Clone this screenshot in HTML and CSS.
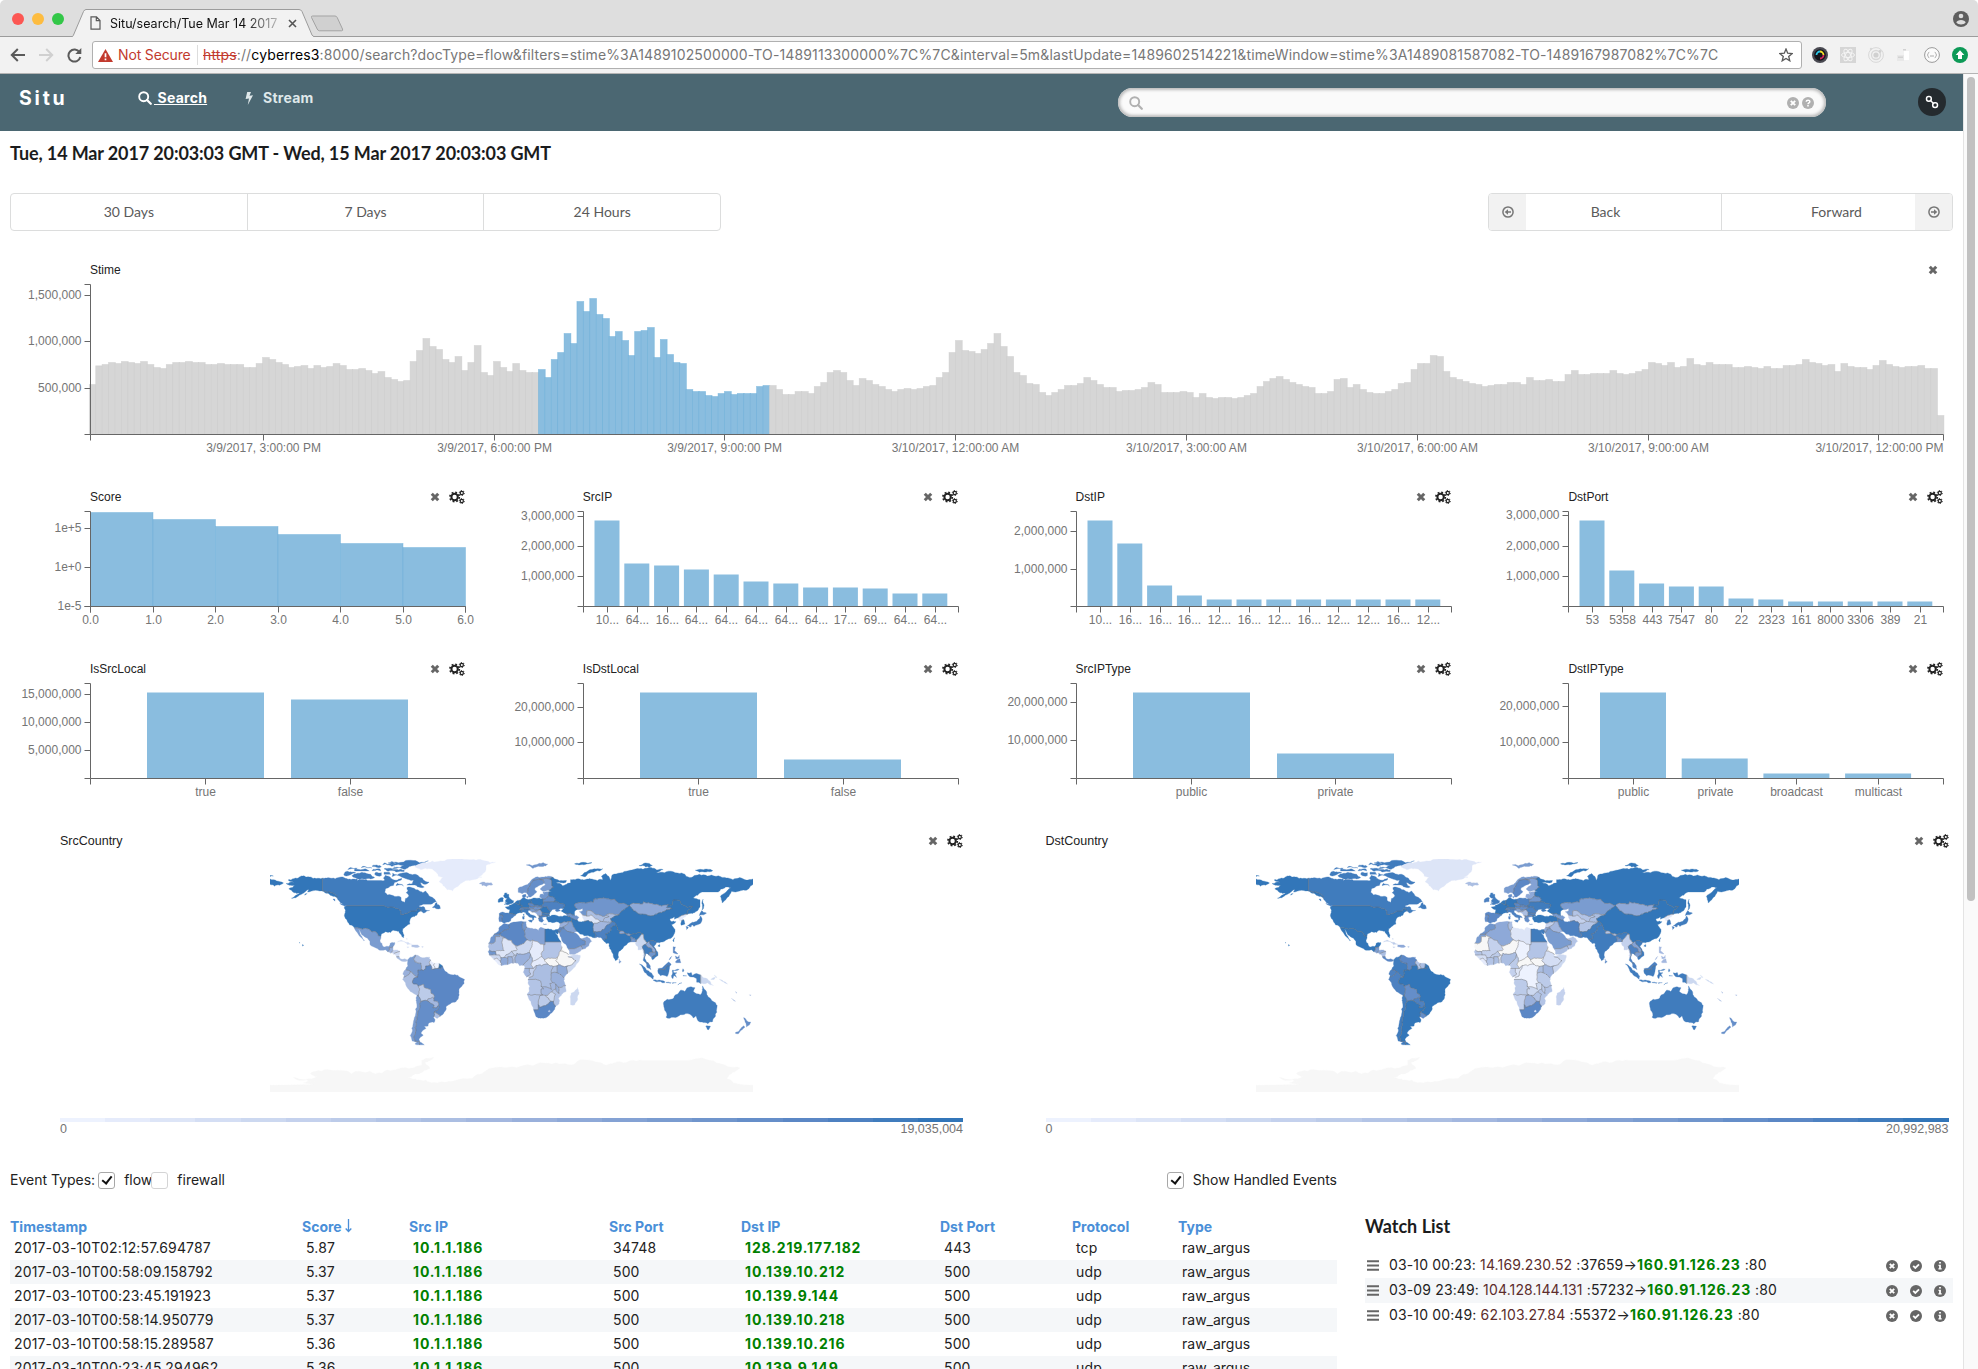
FILE: index.html
```html
<!DOCTYPE html>
<html lang="en">
<head>
<meta charset="utf-8">
<title>Situ/search</title>
<link rel="stylesheet" href="styles.css">
</head>
<body>
<svg class="sprite" aria-hidden="true">
  <symbol id="i-x" viewBox="0 0 9 9"><path d="M1.6 1.6 7.4 7.4M7.4 1.6 1.6 7.4" stroke="currentColor" stroke-width="2.7"/></symbol>
  <symbol id="i-gears" viewBox="0 0 16 14">
    <g fill="none" stroke="currentColor">
      <circle cx="5.6" cy="7" r="3.2" stroke-width="2"/><circle cx="5.6" cy="7" r="4.7" stroke-width="1.7" stroke-dasharray="1.85 1.85"/>
      <circle cx="12.8" cy="3" r="1.6" stroke-width="1.2"/><circle cx="12.8" cy="3" r="2.5" stroke-width="1" stroke-dasharray="1.3 1.3"/>
      <circle cx="12.8" cy="11" r="1.6" stroke-width="1.2"/><circle cx="12.8" cy="11" r="2.5" stroke-width="1" stroke-dasharray="1.3 1.3"/>
    </g>
  </symbol>
  <symbol id="i-search" viewBox="0 0 14 14"><circle cx="5.7" cy="5.7" r="4.5" fill="none" stroke="currentColor" stroke-width="1.9"/><path d="M9 9l3.8 3.8" stroke="currentColor" stroke-width="2.2" stroke-linecap="round"/></symbol>
  <symbol id="i-cx" viewBox="0 0 12 12"><circle cx="6" cy="6" r="6" fill="currentColor"/><path d="M3.8 3.8 8.2 8.2M8.2 3.8 3.8 8.2" stroke="#fff" stroke-width="1.9"/></symbol>
  <symbol id="i-cq" viewBox="0 0 12 12"><circle cx="6" cy="6" r="6" fill="currentColor"/><path d="M4.2 4.7C4.3 2.6 7.9 2.6 7.8 4.7 7.7 5.9 6 5.8 6 7.2M6 8v1.6" fill="none" stroke="#fff" stroke-width="1.5"/></symbol>
  <symbol id="i-cc" viewBox="0 0 12 12"><circle cx="6" cy="6" r="6" fill="currentColor"/><path d="M3.2 5.9 5.3 8 9 4.3" fill="none" stroke="#fff" stroke-width="1.8"/></symbol>
  <symbol id="i-ci" viewBox="0 0 12 12"><circle cx="6" cy="6" r="6" fill="currentColor"/><path d="M5.1 2h1.8v1.5H5.1zM4.5 4.8h2.4v3.5h.8v1.2H4.4V8.300h.7V6h-.6z" fill="#fff"/></symbol>
  <symbol id="i-left" viewBox="0 0 12 12"><circle cx="6" cy="6" r="5.100" fill="none" stroke="currentColor" stroke-width="1.500"/><path d="M2.700 6 6 3.200v2h3v1.600H6v2z" fill="currentColor"/></symbol>
  <symbol id="i-link" viewBox="0 0 14 14"><g fill="none" stroke="currentColor" stroke-width="1.500"><rect x="1.500" y="1.500" width="4.800" height="4.800" rx="2.200"/><rect x="7.700" y="7.700" width="4.800" height="4.800" rx="2.200"/><path d="M5 5l4 4"/></g></symbol>
  <symbol id="i-menu" viewBox="0 0 12 11"><path d="M0 1.200h12M0 5.500h12M0 9.800h12" stroke="currentColor" stroke-width="1.900"/></symbol>
</svg>

<div class="tabstrip">
  <div class="lights"><i class="red"></i><i class="yellow"></i><i class="green"></i></div>
  <div class="tab">
    <svg class="tab-shape" width="242" height="28" viewBox="0 0 242 28"><path d="M0 27.500C1 27.500 1 27 1.500 26L11.500 2.500Q12.500.5 14 .5H227Q229 .5 230 2.500L240 26Q241 27.500 242 27.500V28H0z" fill="#f2f2f2"/><path d="M0 27.500C1 27.500 1 27 1.500 26L11.500 2.500Q12.500.5 14 .5H227Q229 .5 230 2.500L240 26Q241 27.500 242 27.500" fill="none" stroke="#9c9c9c"/></svg>
    <svg class="tab-doc" width="11" height="14" viewBox="0 0 11 14"><path d="M1 .8h5.500L10 4.500v8.700H1zM6.300 1v3.700H10" fill="none" stroke="#5a5a5a" stroke-width="1.200"/></svg>
    <span class="tab-title">Situ/search/Tue Mar 14 2017 -</span>
    <svg class="tab-close" width="9" height="9" viewBox="0 0 9 9"><path d="M1 1l7 7M8 1 1 8" stroke="#555" stroke-width="1.600"/></svg>
  </div>
  <svg class="newtab" width="34" height="18" viewBox="0 0 34 18"><path d="M2.500 1H25q1.500 0 2.200 1.500L32.500 14q.8 1.800-1 1.800H9.500Q8 15.800 7.200 14L1.500 2.500Q1 1 2.500 1z" fill="#d0d0d0" stroke="#a3a3a3"/></svg>
  <svg class="profile" width="16" height="16" viewBox="0 0 16 16"><circle cx="8" cy="8" r="8" fill="#5e5e5e"/><circle cx="8" cy="5" r="2.300" fill="#dedede"/><path d="M3.300 11.500C4 8 12 8 12.700 11.500 11 14 5 14 3.300 11.500z" fill="#dedede"/></svg>
</div>

<div class="toolbar">
  <svg width="16" height="14" viewBox="0 0 16 14"><path d="M15 7H2M7.800 1 1.800 7l6 6" fill="none" stroke="#5a5a5a" stroke-width="2"/></svg>
  <svg class="fwd" width="16" height="14" viewBox="0 0 16 14"><path d="M1 7h13M8.200 1l6 6-6 6" fill="none" stroke="#d0d0d0" stroke-width="2"/></svg>
  <svg class="reload" width="15" height="15" viewBox="0 0 15 15"><path d="M12.500 4.300A6 6 0 1 0 13.300 9" fill="none" stroke="#5a5a5a" stroke-width="2"/><path d="M14.300 0v6H8.300z" fill="#5a5a5a"/></svg>
  <div class="address">
    <svg width="15" height="13" viewBox="0 0 15 13"><path d="M7.500 0 15 13H0z" fill="#c23a2e"/><path d="M7.500 4.300v4M7.500 9.500v1.700" stroke="#fff" stroke-width="1.700"/></svg>
    <span class="insecure">Not Secure</span>
    <span class="url"><s>https</s>://<b>cyberres3</b>:8000/search?docType=flow&amp;filters=stime%3A1489102500000-TO-1489113300000%7C%7C&amp;interval=5m&amp;lastUpdate=1489602514221&amp;timeWindow=stime%3A1489081587082-TO-1489167987082%7C%7C</span>
    <svg class="star" width="14" height="14" viewBox="0 0 14 14"><path d="M7 1l1.700 4.200 4.500.3-3.500 2.900 1.100 4.400L7 10.400l-3.800 2.400 1.100-4.400L.8 5.500l4.500-.3z" fill="none" stroke="#5a5a5a" stroke-width="1.300"/></svg>
  </div>
  <div class="exts">
    <svg viewBox="0 0 16 16"><circle cx="8" cy="8" r="8" fill="#4a4a52"/><circle cx="8" cy="8" r="5.800" fill="#16161c"/><path d="M4.500 8A3.500 3.500 0 0 1 8 4.500" fill="none" stroke="#2ec8e8" stroke-width="1.800"/><path d="M8 4.500A3.500 3.500 0 0 1 11.500 8" fill="none" stroke="#f4e02a" stroke-width="1.800"/><path d="M11.500 8A3.500 3.500 0 0 1 8 11.500" fill="none" stroke="#d8265c" stroke-width="1.800"/></svg>
    <svg viewBox="0 0 16 16"><path d="M0 0h16v16H0z" fill="#d6d6d6"/><g fill="none" stroke="#f4f4f4"><ellipse cx="8" cy="8" rx="6.500" ry="2.500"/><ellipse cx="8" cy="8" rx="6.500" ry="2.500" transform="rotate(60 8 8)"/><ellipse cx="8" cy="8" rx="6.500" ry="2.500" transform="rotate(120 8 8)"/></g></svg>
    <svg viewBox="0 0 16 16"><g fill="none" stroke="#d8d8d8"><circle cx="8" cy="8" r="7.400"/><circle cx="8" cy="8" r="4.500" stroke-width="1.300"/></g><circle cx="8" cy="8" r="2.600" fill="#d0d0d0"/><circle cx="12" cy="4.500" r="1.400" fill="#d0d0d0"/><circle cx="3" cy="2" r="1.200" fill="#d8d8d8"/></svg>
    <svg viewBox="0 0 16 16"><path d="M1 8h7v6H1z" fill="#e8e8e8"/><path d="M8 4h5v9H8z" fill="#fff"/><path d="M2 9.500h5v1.500H2zM7 2h3v1.500H7z" fill="#d2d2d2"/></svg>
    <svg viewBox="0 0 16 16"><circle cx="8" cy="8" r="7.400" fill="#fbfbfb" stroke="#9a9a9a"/><path d="M5.300 5.300Q4.200 5.300 4.200 6.500T3.200 8q1 .3 1 1.500t1.100 1.200M10.700 5.300q1.100 0 1.100 1.200T12.800 8q-1 .3-1 1.500t-1.100 1.200M6 9h4" fill="none" stroke="#aaa"/></svg>
    <svg viewBox="0 0 16 16"><circle cx="8" cy="8" r="8" fill="#0d9a57"/><path d="M8 3.200 12.300 8H10v4H6V8H3.700z" fill="#fff"/></svg>
  </div>
</div>

<div class="viewport">
<main class="page">
  <header class="nav">
    <span class="brand">Situ</span>
    <a class="nav-search"><svg width="14" height="14"><use href="#i-search"/></svg><u>&nbsp;Search</u></a>
    <a class="nav-stream"><svg width="8" height="13" viewBox="0 0 8 13"><path d="M2.200 0H6L4.500 3.800 8 3.300 2.800 13 4 6.500.6 7z" fill="#dfe8ea"/></svg><span>Stream</span></a>
    <div class="searchbox"><svg width="14" height="14"><use href="#i-search"/></svg><span class="grow"></span><svg width="12" height="12"><use href="#i-cx"/></svg><svg class="help" width="12" height="12"><use href="#i-cq"/></svg></div>
    <span class="linkbtn"><svg width="14" height="14"><use href="#i-link"/></svg></span>
  </header>

  <h1 class="range">Tue, 14 Mar 2017 20:03:03 GMT - Wed, 15 Mar 2017 20:03:03 GMT</h1>

  <div class="buttons">
    <div class="group presets"><span>30 Days</span><span>7 Days</span><span>24 Hours</span></div>
    <div class="group pager">
      <i><svg width="12" height="12"><use href="#i-left"/></svg></i><span class="prev">Back</span><span class="next">Forward</span><i><svg class="flip" width="12" height="12"><use href="#i-left"/></svg></i>
    </div>
  </div>

  <section class="panel timeline">
    <div class="head"><span>Stime</span><svg class="close" width="10" height="10"><use href="#i-x"/></svg></div>
    <svg id="stime" class="chart" width="1943" height="182"></svg>
  </section>

  <div class="grid" id="grid"></div>
  <div class="maps" id="maps"></div>

  <div class="filters">
    <div class="types">Event Types: <i class="box on"></i><span>flow</span><i class="box off"></i><span>firewall</span></div>
    <div class="handled"><i class="box on"></i><span>Show Handled Events</span></div>
  </div>

  <div class="lower">
    <table class="events">
      <thead><tr><th>Timestamp</th><th>Score <svg width="7" height="14" viewBox="0 0 7 14"><path d="M3.500 0v12.500M.7 9.500l2.800 3 2.800-3" fill="none" stroke="#4a8fd8" stroke-width="1.300"/></svg></th><th>Src IP</th><th>Src Port</th><th>Dst IP</th><th>Dst Port</th><th>Protocol</th><th>Type</th></tr></thead>
      <tbody>
        <tr><td>2017-03-10T02:12:57.694787</td><td>5.87</td><td class="ip">10.1.1.186</td><td>34748</td><td class="ip">128.219.177.182</td><td>443</td><td>tcp</td><td>raw_argus</td></tr>
        <tr><td>2017-03-10T00:58:09.158792</td><td>5.37</td><td class="ip">10.1.1.186</td><td>500</td><td class="ip">10.139.10.212</td><td>500</td><td>udp</td><td>raw_argus</td></tr>
        <tr><td>2017-03-10T00:23:45.191923</td><td>5.37</td><td class="ip">10.1.1.186</td><td>500</td><td class="ip">10.139.9.144</td><td>500</td><td>udp</td><td>raw_argus</td></tr>
        <tr><td>2017-03-10T00:58:14.950779</td><td>5.37</td><td class="ip">10.1.1.186</td><td>500</td><td class="ip">10.139.10.218</td><td>500</td><td>udp</td><td>raw_argus</td></tr>
        <tr><td>2017-03-10T00:58:15.289587</td><td>5.36</td><td class="ip">10.1.1.186</td><td>500</td><td class="ip">10.139.10.216</td><td>500</td><td>udp</td><td>raw_argus</td></tr>
        <tr><td>2017-03-10T00:23:45.294962</td><td>5.36</td><td class="ip">10.1.1.186</td><td>500</td><td class="ip">10.139.9.149</td><td>500</td><td>udp</td><td>raw_argus</td></tr>
      </tbody>
    </table>
    <section class="watch">
      <h2>Watch List</h2>
      <div class="item"><svg width="12" height="11"><use href="#i-menu"/></svg><p>03-10 00:23: <em>14.169.230.52</em> :37659→<b>160.91.126.23</b> :80</p><svg class="act" width="12" height="12"><use href="#i-cx"/></svg><svg class="act" width="12" height="12"><use href="#i-cc"/></svg><svg class="act" width="12" height="12"><use href="#i-ci"/></svg></div>
      <div class="item"><svg width="12" height="11"><use href="#i-menu"/></svg><p>03-09 23:49: <em>104.128.144.131</em> :57232→<b>160.91.126.23</b> :80</p><svg class="act" width="12" height="12"><use href="#i-cx"/></svg><svg class="act" width="12" height="12"><use href="#i-cc"/></svg><svg class="act" width="12" height="12"><use href="#i-ci"/></svg></div>
      <div class="item"><svg width="12" height="11"><use href="#i-menu"/></svg><p>03-10 00:49: <em>62.103.27.84</em> :55372→<b>160.91.126.23</b> :80</p><svg class="act" width="12" height="12"><use href="#i-cx"/></svg><svg class="act" width="12" height="12"><use href="#i-cc"/></svg><svg class="act" width="12" height="12"><use href="#i-ci"/></svg></div>
    </section>
  </div>
</main>
<div class="scroll"><div class="thumb"></div></div>
</div>
<script src="script.js"></script>
</body>
</html>
```
FILE: styles.css
```css
* { box-sizing: border-box; }
body { margin: 0; height: 1369px; overflow: hidden; background: #fff; color: #222; font: 14px/1.2 Inter, "Open Sans", sans-serif; }
svg { display: block; flex: none; }
i { font-style: normal; }
.sprite { display: none; }

/* browser frame */
.tabstrip { display: flex; height: 37px; background: #dedede; border-bottom: 1px solid #9c9c9c; border-radius: 5px 5px 0 0; padding: 0 9px 0 12px; }
.lights { display: flex; gap: 8px; padding-top: 13px; width: 60px; }
.lights i { width: 12px; height: 12px; border-radius: 50%; }
.red { background: #fc5753; }
.yellow { background: #fdbc40; }
.green { background: #33c748; }
.tab { display: grid; grid-template-columns: 18px 11px 9px 172px 6px 9px 1fr; align-items: center; width: 242px; height: 28px; margin-top: 9px; }
.tab > * { grid-row: 1; }
.tab-shape { grid-column: 1 / -1; }
.tab-doc { grid-column: 2; }
.tab-title { grid-column: 4; font-size: 12.500px; white-space: nowrap; overflow: hidden; color: #111; -webkit-mask-image: linear-gradient(90deg, #000 78%, transparent 104%); }
.tab-close { grid-column: 6; }
.newtab { margin: 15px 0 0 -4px; }
.profile { margin: 11px 0 0 auto; }
.toolbar { display: flex; align-items: center; height: 37px; background: #f2f2f2; border-bottom: 1px solid #b4b4b4; padding: 0 10px; }
.toolbar .fwd { margin-left: 12px; }
.toolbar .reload { margin: 0 10px 0 13px; }
.address { display: flex; flex: none; align-items: center; width: 1710px; height: 28px; background: #fff; border: 1px solid #b0b0b0; border-radius: 3px; padding: 0 8px 0 5px; white-space: nowrap; }
.insecure { width: 80px; height: 20px; line-height: 20px; margin-left: 5px; color: #c23a2e; font-size: 14px; letter-spacing: -.15px; border-right: 1px solid #ddd; }
.url { margin-left: 5px; color: #777; font-size: 14px; letter-spacing: .135px; flex: 1; }
.url s { color: #c23a2e; }
.url b { font-weight: 400; color: #000; }
.exts { display: flex; gap: 12px; margin-left: 10px; }
.exts svg { width: 16px; height: 16px; }
.viewport { display: flex; height: 1295px; }
.page { width: 1963px; overflow: hidden; }
.scroll { width: 15px; background: #fafafa; border-left: 1px solid #e4e4e4; padding: 3px 2px 0 3px; }
.thumb { width: 8px; height: 824px; border-radius: 4px; background: #c1c1c1; }

/* application header */
.nav { display: flex; height: 57px; background: #4b6772; color: #fff; padding-left: 19px; }
.brand { width: 119px; padding-top: 13px; font: 700 19.500px/22px Inter, sans-serif; letter-spacing: 2.800px; }
.nav a { display: flex; align-items: center; height: 20px; margin-top: 14px; font-weight: 700; letter-spacing: .25px; }
.nav-search { width: 107px; }
.nav-search svg { margin-right: 2px; }
.nav-stream { color: #dfe8ea; gap: 10px; }
.searchbox { display: flex; align-items: center; width: 708px; height: 29px; margin: 14px 0 0 auto; background: #fafafa; border-radius: 15px; box-shadow: inset 0 0 3px 2px #bbb; padding: 0 12px 0 11px; color: #b0b0b0; }
.grow { flex: 1; }
.help { margin-left: 3px; }
.linkbtn { display: grid; place-items: center; width: 28px; height: 28px; margin: 14px 17px 0 92px; border-radius: 50%; background: #242a2e; }

.range { height: 62px; margin: 0; padding: 11px 0 0 10px; font: 700 18px/22px Lato, sans-serif; letter-spacing: -.13px; color: #1b1c1d; }
.buttons { display: flex; justify-content: space-between; height: 38px; padding: 0 10px; font: 14px Lato, sans-serif; color: #5a5a5a; }
.group { display: flex; border: 1px solid #dcdddd; border-radius: 4px; overflow: hidden; }
.group span { flex: 1; display: grid; place-items: center; padding-bottom: 2px; border-left: 1px solid #dcdddd; }
.group span:first-child, .group i + span { border-left: 0; }
.presets { width: 711px; }
.pager { width: 465px; }
.pager i { display: grid; place-items: center; width: 37px; background: #f2f2f2; color: #777; }
.pager .prev { flex: none; width: 195px; padding-right: 36px; }
.pager .next { padding-left: 36px; }
.flip { transform: scaleX(-1); }

/* chart panels */
.head { display: flex; align-items: center; height: 16px; padding: 0 10px 0 80px; font: 12px "Liberation Sans", Arial, sans-serif; color: #222; }
.head .close { margin-left: auto; color: #666; }
.head .gear { margin-left: 9px; color: #222; }
.timeline { padding: 31px 0 0 10px; }
.timeline .head { padding-right: 25px; }
.chart { overflow: visible; }
.chart text { font: 12px "Liberation Sans", Arial, sans-serif; fill: #757575; }
.chart .axis { fill: none; stroke: #666; }
.bar { fill: #8abddf; }
.bar.edge { stroke: #6bafd9; stroke-width: .7px; stroke-opacity: .6; }
.bar.muted { fill: #d6d6d6; stroke: #ccc; stroke-width: .7px; stroke-opacity: .6; }
.grid { display: grid; grid-template-columns: repeat(4, 460px); column-gap: 32.800px; row-gap: 28px; padding: 28px 0 0 10px; }
.grid .head { padding: 1px 5px 0 80px; }
.maps { display: grid; grid-template-columns: 903px 903px; column-gap: 82.500px; padding: 28px 0 0 60px; }
.maps .head { padding: 1px 0 0; font-size: 12.500px; }
.map { margin: 11px 0 26px 210px; }
.borders { fill: none; stroke: #666; stroke-opacity: .55; stroke-width: .8px; }
.legend { display: flex; height: 4px; }
.legend i { flex: 1; }
.ends { display: flex; justify-content: space-between; font: 12.500px/15px "Liberation Sans", Arial, sans-serif; color: #757575; }

/* filters and lists */
.filters { display: flex; width: 1337px; height: 17px; margin-top: 35px; padding-left: 10px; justify-content: space-between; }
.types, .handled { display: flex; align-items: center; white-space: nowrap; }
.box { width: 17px; height: 17px; border: 1px solid #a8a8a8; border-radius: 3px; }
.box.off { border-color: #d4d4d5; }
.box.on::after { content: ""; display: block; width: 4px; height: 8px; margin: 1px 0 0 5px; border: solid #111; border-width: 0 2.500px 2.500px 0; transform: rotate(38deg); }
.types .box { margin-left: 3px; }
.types span + .box { margin-left: -1px; }
.box + span { margin-left: 9px; }
.lower { display: flex; align-items: flex-start; gap: 28px; padding: 28px 0 0 10px; }
.events { width: 1327px; table-layout: fixed; border-collapse: collapse; letter-spacing: .14px; }
.events th { height: 19px; padding: 0; text-align: left; font-weight: 700; letter-spacing: 0; color: #4a8fd8; line-height: 19px; }
.events th svg { display: inline-block; vertical-align: -1px; }
.events th:nth-child(1) { width: 292px; }
.events th:nth-child(2) { width: 107px; }
.events th:nth-child(3) { width: 200px; }
.events th:nth-child(4) { width: 132px; }
.events th:nth-child(5) { width: 199px; }
.events th:nth-child(6) { width: 132px; }
.events th:nth-child(7) { width: 106px; }
.events td { height: 24px; padding: 0 0 0 4px; line-height: 24px; }
.events td:last-child { letter-spacing: 0; }
.events tr:nth-child(even) td { background: #f5f7f9; }
.events td.ip { font-weight: 700; letter-spacing: .85px; color: #008000; }
.watch { width: 588px; }
.watch h2 { margin: -1px 0 17px; font: 700 18px/20px Lato, sans-serif; color: #1b1c1d; }
.item { display: flex; align-items: center; height: 25px; padding: 0 7px 0 2px; color: #666; }
.item:nth-of-type(even) { background: #f5f7f9; }
.item p { flex: 1; margin: 0 0 0 10px; color: #222; letter-spacing: .14px; white-space: nowrap; }
.item em { font-style: normal; color: #5c2c2c; }
.item b { letter-spacing: .8px; color: #008000; }
.item .act { margin-left: 12px; }
```
FILE: script.js
```js
const AX = 80.5;
const el = (tag, attrs, text) => {
  const a = Object.entries(attrs).map(([k, v]) => `${k}="${v}"`).join(' ');
  return `<${tag} ${a}>${text === undefined ? '' : text}</${tag}>`;
};
const bar = (x, w, h, base, cls) => el('rect', { class: cls, x: x.toFixed(2), y: (base - h).toFixed(2), width: w.toFixed(2), height: h.toFixed(2) });

function axes(top, base, right, yTicks, xTicks) {
  let d = `M${AX - 6} ${top}H${AX}V${base}H${AX - 6}M${AX} ${base + 6}V${base}H${right}V${base + 6}`, t = '';
  yTicks.forEach(([h, label]) => {
    const y = Math.floor(base - h) + .5;
    d += `M${AX - 6} ${y}H${AX}`;
    t += el('text', { x: AX - 9, y: y + 3.5, 'text-anchor': 'end' }, label);
  });
  xTicks.forEach(([x, label, anchor]) => {
    const px = Math.floor(x) + .5;
    d += `M${px} ${base}V${base + 6}`;
    t += el('text', { x: anchor ? right : px, y: base + 17.5, 'text-anchor': anchor || 'middle' }, label);
  });
  return el('path', { class: 'axis', d }) + t;
}

/* five-minute flow counts, in thirds of a pixel of bar height */
const flow = [150,206,210,216,213,219,216,213,219,210,201,198,210,216,216,219,216,216,210,210,213,210,210,210,201,201,213,231,225,216,210,201,204,207,198,207,201,204,213,207,195,195,198,192,183,189,171,165,159,162,219,252,288,264,255,225,216,234,192,216,267,186,177,219,201,189,213,192,186,186,
195,171,225,246,303,273,399,369,408,360,348,294,309,282,237,309,312,321,231,285,240,216,213,135,129,129,117,114,123,129,120,123,123,123,144,147,
147,135,120,120,129,129,123,144,156,186,192,186,162,147,168,162,150,144,135,129,135,138,135,138,144,147,171,186,246,282,252,249,243,255,273,303,264,234,186,177,153,150,126,117,126,135,147,147,153,171,162,150,141,141,129,132,132,135,141,156,150,126,126,126,129,126,111,123,111,108,111,111,108,111,117,123,144,159,168,174,165,156,150,144,141,123,123,129,165,168,141,150,135,126,123,123,129,135,153,156,195,213,213,237,234,189,171,165,159,153,150,144,147,150,150,156,156,150,171,162,162,165,159,159,180,192,180,180,183,183,183,192,183,180,183,189,195,216,213,207,216,201,204,228,210,207,216,210,210,210,201,201,204,201,198,204,198,198,207,207,210,225,216,213,207,210,189,213,204,201,201,195,207,222,210,204,201,204,204,207,198,198,57];
const STEP = 6.416;
document.getElementById('stime').innerHTML =
  flow.map((v, i) => bar(AX + i * STEP - 1.2, STEP + .4, v / 3, 156.5, i >= 70 && i < 106 ? 'bar edge' : 'bar muted')).join('') +
  axes(6.5, 156.5, 1933.5, [[139.5, '1,500,000'], [93, '1,000,000'], [46.5, '500,000']],
    ['3/9/2017, 3:00:00 PM', '3/9/2017, 6:00:00 PM', '3/9/2017, 9:00:00 PM', '3/10/2017, 12:00:00 AM', '3/10/2017, 3:00:00 AM', '3/10/2017, 6:00:00 AM', '3/10/2017, 9:00:00 AM', '3/10/2017, 12:00:00 PM']
      .map((l, i) => [AX + 172.8 + i * 230.8, l, i === 7 ? 'end' : '']));

const charts = [
  { name: 'Score', off: 0, pitch: 62.5, w: 62.5, h: [94,87,80,72,63,59], y: [[78,'1e+5'],[39,'1e+0'],[0,'1e-5']], x: [0,1,2,3,4,5,6].map(n => [n * 62.5, n + '.0']) },
  { name: 'SrcIP', off: 11, pitch: 29.8, w: 25, h: [86,43,41,37,32,25,23,19,19,18,13,13], y: [[90,'3,000,000'],[60,'2,000,000'],[30,'1,000,000']], x: '10 64 16 64 64 64 64 64 17 69 64 64'.split(' ').map((n, i) => [24 + i * 29.8, n + '...']) },
  { name: 'DstIP', off: 11, pitch: 29.8, w: 25, h: [86,63,21,11,7,7,7,7,7,7,7,7], y: [[75,'2,000,000'],[37.5,'1,000,000']], x: '10 16 16 16 12 16 12 16 12 12 16 12'.split(' ').map((n, i) => [24 + i * 29.8, n + '...']) },
  { name: 'DstPort', off: 11, pitch: 29.8, w: 25, h: [86,36,23,20,20,8,7,5,5,5,5,5], y: [[91,'3,000,000'],[60.5,'2,000,000'],[30,'1,000,000']], x: '53 5358 443 7547 80 22 2323 161 8000 3306 389 21'.split(' ').map((n, i) => [24 + i * 29.8, n]) },
  { name: 'IsSrcLocal', off: 56.5, pitch: 144, w: 117, h: [86,79], y: [[84,'15,000,000'],[56,'10,000,000'],[28,'5,000,000']], x: [[115,'true'],[260,'false']] },
  { name: 'IsDstLocal', off: 56.5, pitch: 144, w: 117, h: [86,19], y: [[71,'20,000,000'],[36,'10,000,000']], x: [[115,'true'],[260,'false']] },
  { name: 'SrcIPType', off: 56.5, pitch: 144, w: 117, h: [86,25], y: [[76,'20,000,000'],[38,'10,000,000']], x: [[115,'public'],[259,'private']] },
  { name: 'DstIPType', off: 31.5, pitch: 81.7, w: 66, h: [86,20,5,5], y: [[72,'20,000,000'],[36,'10,000,000']], x: [[65,'public'],[147,'private'],[228,'broadcast'],[310,'multicast']] }
];
const head = name => `<div class="head"><span>${name}</span><svg class="close" width="10" height="10"><use href="#i-x"/></svg><svg class="gear" width="16" height="14"><use href="#i-gears"/></svg></div>`;
document.getElementById('grid').innerHTML = charts.map(c => `<section class="panel">${head(c.name)}<svg class="chart" width="460" height="128">` +
  c.h.map((v, i) => bar(AX + c.off + i * c.pitch, c.w, v, 102.5, c.off ? 'bar' : 'bar edge')).join('') +
  axes(7.5, 102.5, AX + 375, c.y, c.x.map(([x, l]) => [AX + x, l])) + '</svg></section>').join('');

/* countries: [level by source, level by destination, rings of lon,lat] */
const alaskaLine = '-141,69.6 -141,60.3 -137.5,58.9 -135.5,59.5 -133,58.5 -130,56 -130,55';
const line49 = '-123,49 -95,49 -89,48 -84,46.5 -82.5,45 -82.5,42.500 -79,43 -76.5,44 -75,45 -71.5,45 -69,47.4 -67,45';
const world = [
[20,20,alaskaLine+' -133,56 -136,58 -140,59.8 -146,60.6 -149,60 -152,59.2 -151,61 -154,59.2 -158,57 -164,54.6 -162,55.8 -158,58.5 -162,58.7 -164,60.5 -166,61.7 -161,64.5 -168,65.6 -162,66.3 -166.5,68.3 -163,69.2 -156.5,71.3 -150,70.5|'+line49+' -70,43.5 -70.5,42 -74,40.6 -75.5,39 -76,37 -75.7,35.3 -78,34 -81,32 -81.3,30 -80.1,27 -80.4,25.2 -81.7,26 -82.8,28 -84,30 -86,30.4 -89.5,30 -90,29.1 -94,29.6 -97,28 -97.3,26 -99.2,26.5 -101,29.5 -102.7,29.7 -104,29.5 -106.5,31.7 -111,31.4 -114.8,32.5 -117.1,32.5 -118.5,34 -120.6,34.6 -122,36.7 -124,40 -124.3,43 -124,46.3 -124.6,48.3|-155.8,20 -154.9,19.5 -155.8,18.9|-158,21.6 -157.6,21.2 -158.3,21.3|-154,57.8 -152.3,58 -154,56.8'],
[19,19,alaskaLine+' -128,52 -125,50 '+line49+' -65.5,43.6 -61,45.5 -64.5,46.3 -65,48 -69,48.5 -66,50.2 -60,50.2 -56,52 -58,54.5 -61.5,56.5 -64,60 -66,58.8 -70,61 -73.5,62.3 -78,62.4 -77,60 -78.5,58.7 -76.5,56.5 -79,54.5 -79.5,51.5 -82.3,53 -82.3,55.2 -87,56 -92.5,57 -94.5,59 -94,61.5 -90.5,63.5 -88,64.2 -87,66.5 -82,68.3 -82,69.7 -86,68 -88.5,68.6 -94,71.8 -95.5,69.6 -94.5,68.2 -98,67.8 -107.5,67.8 -108,68.5 -115,67.9 -115,69 -124,69.5 -128,70.3 -134.5,69.5|-62,66 -65,65 -68,66.2 -65,63 -68,62.7 -72,64.5 -78,64.5 -74,65.5 -73,68 -80,69.8 -89,70.8 -88.5,73.5 -85,72 -81,73.5 -76,72.7 -68,70 -61.5,66.7|-105,69 -113,68.7 -117,70 -119,71.5 -115,73.2 -108,73 -105,72.5 -102,70|-125,72 -123,71.2 -120,72.2 -116,73.5 -120,74.3 -124,74.2|-62,82.5 -75,83 -90,81.8 -86,80.5 -92,81 -86,79.5 -80,79.3 -86,77.8 -89,76.5 -80,76.2 -77,77.5 -73,79 -66,80.8|-80,74.6 -92,74.7 -95,76.5 -88,76 -80,75.6|-87,78.6 -96,79.5 -95,81 -90,80.3|-106,75 -117,75 -117,76.3 -108,76.2|-97,71.5 -102,72.5 -101,74 -97,73.7|-90,72.5 -95,72.5 -95,74 -91,74|-97.5,75 -104,75.2 -103,76.3 -98,76.5|-116,76.3 -122,76 -120,77.5 -115,77|-97,78 -104,78.5 -103,79.3 -98,79|-104,77.2 -112,77.6 -110,78.4|-53,47 -56,46.8 -59,47.8 -57,50.5 -55.5,51.5 -55.5,50 -53.5,49|-123.5,48.4 -128,50.7 -125,50|-80.5,63.8 -86,64 -85,65.8 -81.5,64.8|-131.5,52.5 -133,54 -131.8,54'],
[2,3,'-44,60 -48,61 -51,64 -54,67 -51,70 -54.5,71 -58,75.5 -68,76 -72,78 -62,81.2 -50,82.4 -33,83.6 -20,82.5 -12,81.5 -19,79 -19,76 -22,72 -25,71 -22,70.3 -30,68.2 -38,65.7 -41,63'],
[11,9,'-22,64 -18.5,63.4 -14,64.7 -15,66.2 -18,66.1 -22.5,66.4 -24,65.5 -22,65'],
[14,20,'-97.3,26 -99.2,26.5 -101,29.5 -102.7,29.7 -104,29.5 -106.5,31.7 -111,31.4 -114.8,32.5 -117.1,32.5 -115.7,29.8 -114.2,27.8 -112.2,25.5 -110.2,23 -109.5,23.2 -111.500,26 -113,28.5 -114.8,31.8 -112.8,30 -109.4,25.7 -105.5,22.5 -105.5,20 -101,17.5 -97,15.8 -94,16.1 -92.2,14.6 -91,16 -91,17.8 -89.2,17.8 -88.3,18.5 -87.5,19.5 -87,21.5 -90.4,21 -91.5,18.6 -94.5,18.2 -96,19 -97.8,22 -97.7,24'],
[11,14,'-89.2,17.8 -91,17.8 -91,16 -92.2,14.6 -90,13.8 -89.3,14.4 -88.3,15.7 -88.3,18.5'],
[6,12,'-88.3,15.7 -89.3,14.4 -90,13.8 -87.7,13 -86,14 -83.2,15 -85,16'],
[4,9,'-83.2,15 -86,14 -87.7,13 -85.7,11.1 -83.7,11'],
[9,17,'-83.7,11 -85.7,11.1 -85.5,10 -83,8.3 -80.5,7.4 -78.2,7.6 -77.4,8.6 -79.5,9.5 -82.5,9.2'],
[4,7,'-85,22 -82,23.2 -77,21.7 -74.3,20.2 -77.5,19.9 -78,20.8 -82,22.6|-78,18.4 -76.3,18.2 -77.5,17.7|-78,24.8 -77.7,24 -78.3,24'],
[8,12,'-74.3,19.8 -70,19.8 -68.5,18.5 -71.5,17.8 -74.4,18.4|-67,18.4 -65.8,18.4 -66,18|-61.8,10.7 -61,10.7 -61.3,10.1'],
[14,19,'-77.4,8.6 -75.5,10.6 -71.5,12.3 -73,9.2 -72,7 -67.5,6.2 -67.2,2.3 -67,1.2 -69.8,1 -69.9,-4.2 -73,-2.3 -75.3,-0.1 -78.8,1.4 -77.2,4 -77.4,7'],
[11,18,'-75.3,-0.1 -78.3,-3.4 -80.3,-4.4 -80,-3 -81,-2 -80,0.5 -78.8,1.4'],
[9,18,'-69.9,-4.2 -73,-2.3 -75.3,-0.1 -78.3,-3.4 -80.3,-4.4 -81.2,-6 -79,-8.5 -76.2,-13.8 -72,-17 -70.4,-18.3 -69.5,-17.5 -69,-15 -68.7,-12.5 -69.5,-11 -70.5,-9.5 -73,-9.4 -73.8,-7.3 -72.8,-5.1'],
[9,17,'-71.5,12.3 -73,9.2 -72,7 -67.5,6.2 -67.2,2.3 -67,1.2 -65.5,0.8 -64,2 -64,4 -61,4.5 -60.7,5.2 -61.3,6.5 -60,8.5 -62,10.5 -68,10.7 -70,12'],
[2,8,'-60,8.5 -61.3,6.5 -60.7,5.2 -59.8,4 -59.5,1.5 -57,2 -58,4.5 -57.2,6'],
[1,9,'-57.2,6 -58,4.5 -57,2 -54.6,2.3 -54,5.8'],
[20,20,'-54,5.8 -54.6,2.3 -52.5,2.3 -51.6,4.2'],
[17,20,'-51.6,4.2 -52.5,2.3 -54.6,2.3 -57,2 -59.5,1.5 -59.8,4 -60.7,5.2 -61,4.5 -64,4 -64,2 -65.5,0.8 -67,1.2 -69.8,1 -69.9,-4.2 -72.8,-5.1 -73.8,-7.3 -73,-9.4 -70.5,-9.5 -69.5,-11 -65.4,-9.8 -65,-12 -60.2,-13.7 -60,-16.3 -58.3,-17 -57.6,-19 -58,-20 -57.9,-22.1 -55.6,-22.3 -54.4,-24 -54.5,-25.6 -53.7,-27 -57.6,-30.2 -53.5,-32.5 -53.4,-33.7 -50.2,-30.5 -48.6,-28 -48.5,-25.8 -45,-23.5 -41.5,-22.7 -39.5,-19.5 -39,-13 -35.3,-9 -35,-6 -40,-2.8 -44.5,-2.5 -48,-0.7 -50,0.8'],
[7,16,'-69.5,-11 -68.7,-12.5 -69,-15 -69.5,-17.5 -68.5,-19.5 -67.5,-22.8 -66,-21.9 -62.8,-22 -62.3,-20.5 -59,-19.3 -58,-20 -57.6,-19 -58.3,-17 -60,-16.3 -60.2,-13.7 -65,-12 -65.4,-9.8'],
[10,18,'-62.8,-22 -62.3,-20.5 -59,-19.3 -58,-20 -57.9,-22.1 -55.6,-22.3 -54.4,-24 -54.5,-25.6 -56,-27.3 -58.6,-27.2 -57.7,-25.3'],
[9,16,'-57.6,-30.2 -53.5,-32.5 -53.4,-33.7 -55,-35 -58.2,-34'],
[16,20,'-67.5,-22.8 -66,-21.9 -62.8,-22 -57.7,-25.3 -58.6,-27.2 -56,-27.3 -54.5,-25.6 -53.7,-27 -57.6,-30.2 -58.2,-34 -57,-36 -57.7,-38.2 -62,-39 -62.2,-40.8 -65,-41 -63.7,-42.5 -67.5,-46 -65.8,-47.5 -69,-50.5 -68.4,-52.4 -72,-52 -73,-49 -71.6,-46 -71.8,-42 -70.5,-36 -70,-33 -69.8,-30 -68.3,-27 -68.5,-24.5|-68.6,-52.8 -65,-54.8 -68.6,-54.8'],
[14,19,'-70.4,-18.3 -69.5,-17.5 -68.5,-19.5 -67.5,-22.8 -68.5,-24.5 -68.3,-27 -69.8,-30 -70,-33 -70.5,-36 -71.8,-42 -71.6,-46 -73,-49 -72,-52 -68.4,-52.4 -70.5,-53.5 -74,-52 -75.5,-48 -74,-45 -73.5,-40 -73,-37 -71.5,-32 -70.5,-25|-68.6,-52.8 -68.6,-54.8 -72,-54 -70,-53'],
[0,0,'-180,-85 -147.7,-84.4 -155,-83.2 -142.7,-81.6 -162.6,-79 -145,-78.7 -150,-76 -133,-74 -105.5,-74.5 -88,-73.5 -76,-72.5 -67,-70 -67,-66.5 -58,-64.2 -64.5,-68 -60.7,-72.5 -68,-76 -77,-79.5 -70,-81 -58,-83 -36,-80 -23.5,-76.7 -16,-72.4 16,-70.5 38.6,-69 53.5,-66 71,-70 78.4,-67.5 98,-66.5 130.5,-66.5 153,-68.3 170.3,-72 160.4,-79.8 165.3,-83.2 180,-85 180,-90 -180,-90'],
[17,16,'-9,42 -6.7,42 -7.2,38 -7.4,37.2 -9,37 -9.4,38.8'],
[18,17,'-9,42 -9.2,43.2 -1.8,43.4 3.2,42.4 3,41.8 -0.3,39.5 -0.7,37.6 -2.2,36.8 -5.5,36 -7.4,37.2 -7.2,38 -6.7,42'],
[20,20,'-1.8,43.4 -1.2,46 -4.7,48 -1.6,48.6 -1.5,49.7 1.6,50.8 2.5,51 6,49.5 8,49 7.6,47.6 6,46.3 7,45.9 7.5,43.8 4.5,43.4 3.2,42.4|8.7,42.3 9.4,43 9.3,41.5'],
[20,19,'-5.5,50 1.3,51.2 1.6,52.7 0,53.5 -2,55.8 -2,57.5 -4,57.7 -3.2,58.6 -5,58.6 -6,56.5 -4.8,54.8 -3,54 -4.5,53.2 -4.3,52 -5,51.7 -3,51.4'],
[20,18,'-6.2,52.2 -10,51.7 -9.8,53.7 -8,55 -6,54.8'],
[20,20,'2.5,51 4.5,53 7,53.4 6,51.8 6.1,50 6,49.5'],
[20,20,'7,53.4 8.6,54.9 10.9,54 14.2,53.9 14.8,51 12.2,50.3 13.8,48.7 13,47.6 7.6,47.6 8,49 6,49.5 6.1,50 6,51.8'],
[18,16,'8.6,54.9 8.1,56.8 10.6,57.6 10.8,56.3 9.7,54.9|11,55.7 12.5,56 12,54.8'],
[17,17,'7.6,47.6 13,47.6 13.8,48.7 17,48.5 16.3,46.8 13.7,46.5 10.5,46.8 7,45.9 6,46.3'],
[19,18,'7,45.9 10.5,46.8 13.7,46.5 13.6,45.6 12.3,45.2 12.5,44 14.1,42.5 18.5,40.1 17,40.5 16.6,38.5 15.7,38 15.5,40 12.3,41.8 10.3,43.9 8.8,44.4 7.5,43.8|12.5,38 15.6,38.2 15.1,36.7|8.3,41 9.7,41 9.5,39.1 8.5,39'],
[17,17,'12.2,50.3 14.8,51 18.8,49.6 22.5,49.1 22,48.3 17,48.5 13.8,48.7'],
[20,18,'14.2,53.9 14.8,51 18.8,49.6 22.5,49.1 24,50.5 23.6,51.5 23.6,53.9 22.8,54.4 18.6,54.6'],
[15,16,'16.3,46.8 17,48.5 22,48.3 22.8,47.9 21,46.2 17,46'],
[20,18,'22.8,47.9 26.6,48.3 28.2,45.5 29.7,45.2 28.6,43.8 22.7,44 21,46.2'],
[19,18,'22.7,44 28.6,43.8 28,42 26.3,41.7 22.5,41.4'],
[14,13,'13.7,46.5 16.3,46.8 17,46 21,46.2 19,44.8 15,44.5 13.6,45.6'],
[12,9,'21,46.2 19,44.8 15,44.5 19.4,41.9 20.5,41.5 22.5,41.4 22.7,44'],
[1,2,'19.4,41.9 20.5,41.5 20.8,40 20,39.7'],
[18,16,'20,39.7 20.8,40 20.5,41.5 22.5,41.4 26.3,41.7 26,40.8 23,40.4 24,38 22.8,36.6 21.5,37|23.6,35.4 26.2,35.2 24.500,35'],
[15,14,'5,59 5,62 10.5,64.5 15,68.5 21,70.1 28,71 31,70.2 28.5,69 25.8,69.5 20.6,69 16,68 14,64.5 12.2,62 12.5,59.8 11.2,59 8,58|11,79.5 20,80.3 27,80 20,78.5 16,76.8 14,78.5'],
[16,17,'11.2,59 12.5,59.8 12.2,62 14,64.5 16,68 20.6,69 23.7,68 24.1,65.8 21.5,64.5 17.2,61.5 18.8,59.8 16.5,57 14.3,55.5 12.8,55.5'],
[14,13,'20.6,69 25.8,69.5 28.5,69 30,67.7 30,64 31.5,62.8 27.8,60.5 23,60 21.3,61.5 25.3,65 24.1,65.8 23.7,68'],
[15,12,'21,55.3 21.5,57.5 24.3,57.2 23.5,59.2 28,59.5 27.5,57.5 28.2,56.2 26.5,55.6 25.5,54.2 23.6,53.9 22.8,54.4'],
[16,15,'23.6,53.9 25.5,54.2 26.5,55.6 28.2,56.2 30.8,55.7 32.7,53.4 31.5,52 23.6,51.5'],
[18,19,'22,48.3 22.5,49.1 24,50.5 23.6,51.5 31.5,52 34,52 40,49.6 38.2,47 35,46.2 36.5,45.2 33.8,44.5 32.5,45.5 33.5,46.1 30.7,46.3 29.7,45.2 28.2,45.5 26.6,48.3 22.8,47.9'],
[20,20,'26,40 26.3,39 27.5,36.8 30.5,36.4 36,36 42.4,37.2 44.8,37.2 44.8,39.7 43.5,41.1 41.5,41.5 38,41 33,42 29,41.1|26.3,41.7 28,42 29,41.1 26,40.8'],
[15,14,'41.5,41.5 40,43.4 47,41.8 50.3,40.4 48.9,38.4 44.8,39.7 43.5,41.1'],
[20,20,'28.5,69 31,70.2 41,67.8 40.5,66.5 33,66.6 38,64 40,64.7 44,66 44,68.5 53,68.6 60,69 68,68.5 67,71 70,73 72.5,71 73.5,68 75,72 81,73.5 87,75.1 98,76.2 104,77.6 113,76 108,73.5 114,73.6 127,73.5 130,71 140,72.5 152,71 160,69.8 170,70 180,69 180,65 177.5,62.6 170,60 164,59.8 163,57.8 162,56 157,51.2 155.7,56 161,60.5 163.5,62.5 156,61.5 154,59.3 142,59.3 135.5,54.7 140.5,53.5 140.5,48 135,43.3 131,42.6 131.2,45 135,48.4 131,47.7 127.5,49.8 125,53.2 120.5,53.3 119.8,49.8 117.8,49.5 116.6,49.8 110,49.2 107,49.9 102,51.3 98.5,52 98,50.5 92,50.7 87.8,49.2 83.5,51 80,50.8 77,54 71,54.2 61.5,54 61,51.5 55,51 51,51.5 47,50 47.5,48 49.2,46.3 47,44.5 47,41.8 40,43.4 37,45 39,47.1 38.2,47 40,49.6 34,52 31.5,52 32.7,53.4 30.8,55.7 28.2,56.2 27.5,57.5 28,59.5 30,60 27.8,60.5 31.5,62.8 30,64 30,67.7|-180,69 -180,65 -173,64.3 -170,66 -175,67.5|51.5,71.5 55,70.7 57,73 68,76.7 60,76 54,73.5|95,79 100,81 105,79 100,78|137,75.5 142,76 150,75.2 140,74|142,46 143.5,49 142.8,54 141.8,51|47,80.3 60,81.2 56,80.2|-180,71.5 -177.5,71.2 -180,70.9'],
[15,14,'49.2,46.3 47.5,48 47,50 51,51.5 55,51 61,51.5 61.5,54 71,54.2 77,54 80,50.8 83.5,51 87.8,49.2 85,47.2 82.5,45.3 80.2,42.2 74,43 70.5,42 68,41 66,42 61,44 58.5,45.5 56,45 56,41.3 52.5,42.5 50.5,44.5 53,45.3 53,47'],
[9,8,'56,41.3 56,45 58.5,45.5 61,44 66,42 68,41 70.5,42 72.8,41 70,40.2 67.8,37.2 66.5,37.4 64,39 60,42'],
[3,6,'52.5,42.5 56,41.3 60,42 64,39 66.5,37.4 64.5,36.3 61.2,35.6 60,37 57,38 54,37.3 53,40'],
[9,9,'74,43 80.2,42.2 73.8,39.5 75,37.3 71.5,36.7 67.8,37.2 70,40.2 72.8,41 70.5,42'],
[10,8,'61.2,35.6 64.5,36.3 66.5,37.4 67.8,37.2 71.5,36.7 75,37.3 71,34.5 69.5,31.8 66.3,29.8 61,29.6 60.6,33'],
[18,19,'75,37.3 78,35 74,32.5 74.5,31 70,28 71,24.5 68,23.7 66.5,25.3 61.6,25.1 63,27 61,29.6 66.3,29.8 69.5,31.8 71,34.5'],
[20,18,'44.8,39.7 48.9,38.4 50,37 54,37.3 57,38 60,37 61.2,35.6 60.6,33 61,29.6 63,27 61.6,25.1 57,26.8 54,26.6 51,28 48.5,30 46,33.3 44.8,37.2'],
[12,12,'87.8,49.2 92,50.7 98,50.5 98.5,52 102,51.3 107,49.9 110,49.2 116.6,49.8 115.5,47.8 119.7,46.8 111.8,43.8 105,41.6 96.5,42.7 90.9,45.2'],
[20,20,'87.8,49.2 90.9,45.2 96.5,42.7 105,41.6 111.8,43.8 119.7,46.8 115.5,47.8 116.6,49.8 117.8,49.5 119.8,49.8 120.5,53.3 125,53.2 127.5,49.8 131,47.7 135,48.4 131.2,45 131,42.6 128,42 124.3,40 121.5,39 121.5,40.8 118,39.2 119,37.3 122.5,37.2 119.3,35 121.8,31.5 121.5,28.5 118.5,24.5 114,22.5 110.5,21.3 108,21.6 105.5,23 102.2,22.4 101,21.3 98.8,24 98,28 96,29 92,27.9 88.8,27.5 86,28 81,30.2 79,31.5 78,35 75,37.3 73.8,39.5 80.2,42.2 82.5,45.3 85,47.2|109,19 110.500,20 110.5,18.5|120.2,23 121.5,25.2 121,22'],
[20,19,'78,35 79,31.5 81,30.2 80.2,28.8 88,26.5 88.8,27.5 92,27.9 96,29 98,28 97,27.5 94.5,24.5 92.8,22 91.5,24.5 89,26 88.8,22 87,21.4 82.3,16.6 80.2,15 79.9,10.5 77.5,8 76.3,10 73.2,17 72.7,21 70.5,20.8 69,22.4 68,23.7 71,24.5 70,28 74.5,31 74,32.5'],
[12,8,'81,30.2 86,28 88.8,27.5 88,26.5 80.2,28.8'],
[15,15,'88.8,22 89,26 91.5,24.5 92.8,22'],
[14,17,'80,9.5 81.8,7.2 80.2,6'],
[5,6,'98,28 97,27.5 94.5,24.5 92.8,22 92.3,20.8 94.3,18.5 94.3,16 97.5,16.5 98.7,10.2 99.5,12 98.3,16.5 97.5,18.5 100,20.3 101,21.3 98.8,24'],
[19,18,'100,20.3 97.5,18.5 98.3,16.5 99.5,12 98.7,10.2 98.3,8 100.2,6.5 102,6.2 100,8.5 99.3,11 100,13.4 102.6,12 102.5,14 105.3,14.3 104.7,17 102,18'],
[12,13,'100,20.3 101,21.3 102.2,22.4 105,18.8 107.5,15 105.3,14.3 104.7,17 102,18'],
[15,14,'102.6,12 102.5,14 105.3,14.3 107.5,15 107,12 104.5,10.5'],
[19,19,'102.2,22.4 105.5,23 108,21.6 106,19 109,14.5 109.2,11.8 105,8.7 104.5,10.5 107,12 107.5,15 105,18.8'],
[18,18,'100.2,6.5 102,6.2 103.5,4 104,1.4 101,3|109.5,2 110,1.3 114.5,1.4 115.8,4.2 117.8,4 119,5.2 117,7 113,3.2'],
[19,19,'95.3,5.5 98,4.3 104,-1 106,-3.5 105.5,-5.8 101,-2.5|105.5,-6.5 108.5,-6.7 114.4,-7.8 114,-8.5 108,-7.8|109,0.5 109.5,2 110,1.3 114.5,1.4 115.8,4.2 117.8,4 117.5,1 116,-3.8 111,-3.2|120,1 125,1.5 120.5,0.5 121,-1 123.3,-1 121.8,-2 123,-4.5 121,-3 120.3,-5.5 119.2,-3.3|131,-1 134,-0.9 134.5,-3 138,-1.6 141,-2.6 141,-9 138,-8 138,-5.5 133,-4|127.8,2 128.5,0.5 127.7,-0.5|115,-8.2 119,-8.4 118.5,-8.9|120,-8.4 122.8,-8.4 120,-9|124,-10.2 127,-8.5 125,-9|128,-3 130.5,-3.3 128,-3.5'],
[5,5,'141,-2.6 146,-5.5 147.5,-7 150.5,-10.5 146,-8.5 143,-9.2 141,-9|148.5,-6 152,-4.5 151,-6|151,-2.8 153,-4.5 152.5,-4.5|155,-6 158,-7.5 161,-9.5 159,-8.7'],
[17,10,'120.5,14 120.5,18.5 122.2,18.3 121.5,15.5 124,13 121.5,13.5|122,7 125.5,9.5 126.2,6.5 124,6.5|122,11.5 124,10.5 125,12 125,10 122.5,9.5|117.5,8.5 119.5,11.2 118.5,9.5'],
[2,2,'124.3,40 128,42 131,42.6 127.5,39.5 128.3,38.5 126.7,37.8 125,38'],
[20,19,'128.3,38.5 126.7,37.8 126.5,34.5 129.3,35.3'],
[19,19,'131,34 133,35.5 136.8,37 139,38.5 141,41.4 142,39.5 140.8,35.8 136,33.6 135,34.6|130,33.5 131.8,33 130.5,31.2|140,41.6 141.8,45.4 145.3,43.5 143.2,42.2|132.500,33.8 134.500,34 133,33'],
[19,19,'113.7,-22.5 116,-20.8 121,-19.6 122.3,-17.5 126,-14 129,-15 130.8,-12.3 136.8,-12.2 135.5,-15 140.8,-17.5 142.4,-10.8 145.3,-15 146.5,-19 150,-22.3 153.3,-25.5 153,-30.5 150,-37.3 146.3,-39 144,-38.2 140,-37.5 138,-34.5 137.5,-33 135.5,-34.7 131.3,-31.5 126,-32.3 123.7,-33.9 118,-35 115.2,-34.2 115.7,-31.5 113.5,-26|144.8,-40.8 148.3,-41 147,-43.5 146,-43.3'],
[16,16,'173,-34.5 175.5,-37 178.3,-37.8 175.2,-41.5 174.8,-38.8|172.8,-40.6 174,-41.5 171,-44 169,-46.6 166.6,-46 170.5,-43'],
[9,9,'164,-20 167,-22.3 166,-22|177.3,-17.500 178.6,-17.6 178,-18.2|167,-15 167.5,-16.3 168,-16'],
[11,6,'36,36 42.4,37.2 41,34.5 38.8,33.3 35.8,32.7'],
[13,10,'42.4,37.2 44.8,37.2 46,33.3 48.5,30 46.5,29.1 44.7,29.2 39.2,32 38.8,33.3 41,34.5'],
[17,12,'35.8,32.7 38.8,33.3 39.2,32 37,31.5 36,29.2 35,29.5 34.3,31.2'],
[16,14,'35,29.5 36,29.2 37,31.5 39.2,32 44.7,29.2 46.5,29.1 48,28.5 50.2,26.5 51.5,24.5 55,22.7 55,20 52,19 47,17 43.3,17 42.8,16.4 39,21'],
[13,8,'51.5,24.5 56.3,26 59.8,22.5 57.5,19 55,17 53.1,16.6 52,19 55,20 55,22.7'],
[11,9,'52,19 53.1,16.6 45,12.8 43.3,12.8 42.8,16.4 43.3,17 47,17'],
[17,15,'-5.5,35.8 -2,35 -1.5,32.2 -8.7,28.7 -8.7,27.7 -13,27.7 -9.7,30 -9.5,32'],
[15,14,'-13,27.7 -8.7,27.7 -8.7,26 -12,26 -12,23.5 -13,21.3 -17,21 -15.5,25'],
[17,12,'-2,35 3,36.9 8.6,37 8,33 9.5,30.2 9.8,26.5 12,23.5 5.8,19.5 3.2,19.2 -4.8,25 -8.7,27.7 -8.7,28.7 -1.5,32.2'],
[15,9,'8.6,37 11,37 11.3,33.2 9.5,30.2 8,33'],
[13,3,'11.3,33.2 15.3,32.2 20,30.5 22,32.9 25,31.7 25,22 25,20 24,20 15.9,23.4 14,22.6 12,23.5 9.8,26.5 9.5,30.2'],
[20,19,'25,31.7 34.3,31.2 35,29.5 34.3,27.8 32.6,29.9 35.5,24 36.9,22 25,22'],
[8,8,'25,22 36.9,22 37.5,18.5 36.4,15.3 34.3,10.6 33,9.7 24.5,8.9 22.5,11 22,13 24,15.7 24,20 25,20'],
[9,0,'-17,21 -13,21.3 -12,23.5 -12,26 -8.7,26 -8.7,27.7 -4.8,25 -6.5,25 -5.5,15.5 -12,14.8 -16.5,16'],
[3,6,'-4.8,25 3.2,19.2 4.2,16.5 3.5,15.4 0,15 -4,12.5 -5.5,10.5 -8,10.3 -9,12.3 -11.5,12.3 -12,14.8 -5.5,15.5 -6.5,25'],
[5,0,'12,23.5 14,22.6 15.9,23.4 15.5,20 13.5,14 9,12.8 4,13.5 3.6,11.8 2.2,12.3 0,15 3.5,15.4 4.2,16.5 3.2,19.2 5.8,19.5'],
[2,1,'15.9,23.4 24,20 24,15.7 22,13 22.5,11 19,9 15.5,7.6 15.5,10 14.2,12.6 13.5,14 15.5,20'],
[11,9,'13.5,14 9,12.8 4,13.5 3.6,11.8 2.7,6.4 4.5,6.3 6,4.3 8.6,4.6 12,8 14.2,12.6'],
[9,7,'14.2,12.6 15.5,10 15.5,7.6 14.5,5.5 16.2,2.2 13.3,2.2 9.8,2.2 9.7,4 8.6,4.6 12,8'],
[2,0,'15.5,7.6 19,9 22.5,11 24.5,8.9 27.4,5.2 22.5,4.2 18.6,4.4 16.2,2.2 14.5,5.5'],
[0,0,'24.5,8.9 33,9.7 34.3,10.6 33,8 35.3,5 34,4.2 31,3.7 27.4,5.2'],
[0,4,'36.4,15.3 42.4,12.4 42,11 48,8 45,5 42,4.2 39.5,3.5 35.3,5 33,8 34.3,10.6'],
[0,0,'37.5,18.5 36.4,15.3 42.4,12.4 43.2,12.5 39.5,15.5'],
[5,5,'42,11 43.2,11.5 51.2,12 50.8,9.5 47.8,4.3 41.6,-1.7 41,2.8 42,4.2 45,5 48,8'],
[12,10,'34,4.2 35.3,5 39.5,3.5 42,4.2 41,2.8 41.6,-1.7 39.2,-4.7 34,-1'],
[9,9,'31,3.7 34,4.2 34,-1 29.6,-1.3 30,1.5'],
[11,7,'29.6,-1.3 34,-1 39.2,-4.7 39,-7 40.4,-10.5 34.8,-11.5 33,-9.5 30.5,-8.3 29.3,-6'],
[9,1,'27.4,5.2 31,3.7 30,1.5 29.6,-1.3 29.3,-6 30.5,-8.3 28.6,-9 29.8,-13.4 27,-12 22,-11 21.8,-7.3 16.6,-6 12.3,-6 13,-4.5 16,-3.5 18.6,4.4 22.5,4.2'],
[6,3,'18.6,4.4 16,-3.5 13,-4.5 11.2,-4 14.4,-2 13.3,2.2 16.2,2.2'],
[10,6,'9.8,2.2 13.3,2.2 14.4,-2 11.2,-4 8.8,-0.7'],
[8,7,'12.3,-6 16.6,-6 21.8,-7.3 22,-11 24,-13 22,-13.2 22,-16.5 23.3,-17.6 18.5,-17.4 11.8,-17.3 13.7,-11'],
[10,5,'22,-11 27,-12 29.8,-13.4 28.6,-9 30.5,-8.3 33,-9.5 33,-13 30.2,-15.2 27,-17.9 25.3,-17.9 23.3,-17.6 22,-16.5 22,-13.2 24,-13'],
[11,7,'33,-9.5 34.8,-11.5 35.5,-16.5 33,-13'],
[8,8,'34.8,-11.5 40.4,-10.5 40.7,-15 35,-20 35.5,-24 32.8,-26.3 31.3,-22.4 32.8,-17 30.2,-15.2 33,-13 35.5,-16.5'],
[5,8,'27,-17.9 30.2,-15.2 32.8,-17 31.3,-22.4 29.3,-22.2 25.3,-17.9'],
[7,11,'23.3,-17.6 25.3,-17.9 29.3,-22.2 25.5,-25.5 20.7,-26.8 20,-24.8 20,-22 21,-18.3'],
[8,6,'11.8,-17.3 18.5,-17.4 23.3,-17.6 21,-18.3 20,-22 20,-24.8 20,-28.4 16.5,-28.6 14.5,-22.5'],
[17,17,'16.5,-28.6 20,-28.4 20,-24.8 20.7,-26.8 25.5,-25.5 29.3,-22.2 31.3,-22.4 32.8,-26.3 31,-29.8 27,-33.6 20,-34.8 18.3,-33.8'],
[6,1,'27.3,-29.5 28.500,-28.9 28.9,-30 27.8,-30.3'],
[5,6,'49.3,-12 50.4,-15.8 47,-25 44,-24.8 44,-20 44.5,-16.2 47,-15'],
[15,8,'-16.5,16 -12,14.8 -11.5,12.3 -16.7,12.4 -17.4,14.7'],
[5,4,'-16.7,12.4 -11.5,12.3 -9,12.3 -8,10.3 -8.3,7.6 -11,10 -13.2,9'],
[2,2,'-13.2,9 -11,10 -8.3,7.6 -7.5,4.4 -11,6.7'],
[12,8,'-8,10.3 -5.5,10.5 -2.8,9.7 -3,5.1 -7.5,4.4 -8.3,7.6'],
[7,7,'-5.5,10.5 -4,12.5 0,15 2.2,12.3 0.9,11 0,11 -2.8,11 -2.8,9.7'],
[11,9,'-2.8,9.7 -2.8,11 0,11 1.2,6 -3,5.1'],
[8,3,'0,11 0.9,11 2.2,12.3 3.6,11.8 2.7,6.4 1.2,6']
].map(([s, d, p]) => ({ levels: [s, d], rings: p.split('|').map(r => r.trim().split(/\s+/).map(q => q.split(',').map(Number))) }));

const stops = [[1, [237, 242, 254]], [10, [163, 183, 223]], [17, [91, 135, 197]], [20, [50, 118, 185]]];
function color(level) {
  if (!level) return '#f7f7f7';
  const i = level <= 10 ? 0 : level <= 17 ? 1 : 2;
  const [a, ca] = stops[i], [b, cb] = stops[i + 1], t = (level - a) / (b - a);
  return `rgb(${ca.map((c, k) => Math.round(c + (cb[k] - c) * t)).join(',')})`;
}

/* deterministic midpoint displacement gives long edges a natural outline;
   the result depends only on the two end points, so neighbours stay joined */
function edge(a, b, depth) {
  const key = JSON.stringify(a) < JSON.stringify(b);
  const [p, q] = key ? [a, b] : [b, a];
  const dx = q[0] - p[0], dy = q[1] - p[1], len = Math.hypot(dx, dy);
  const straight = dy === 0 || dx === 0 || p[1] < -84;
  if (depth === 0 || len < 1.6 || straight) return [b];
  const n = Math.sin(p[0] * 12.9898 + p[1] * 78.233 + q[0] * 37.7 + q[1] * 11.3) * 43758.5453;
  const k = (n - Math.floor(n) - .5) * .3;
  const m = [(p[0] + q[0]) / 2 - dy * k, (p[1] + q[1]) / 2 + dx * k];
  return edge(a, m, depth - 1).concat(edge(m, b, depth - 1));
}
const X = v => ((v + 180) * 483 / 360).toFixed(2), Y = v => (.4 + (83.6 - v) * 232.6 / 173.6).toFixed(2);
const count = {}, sharedEdges = [];
world.forEach(c => {
  c.d = c.rings.map(r => {
    let pts = [r[0]];
    r.forEach((a, i) => {
      const b = r[(i + 1) % r.length], part = edge(a, b, 3);
      const id = [a.join(), b.join()].sort().join('|');
      count[id] = (count[id] || 0) + 1;
      if (count[id] === 2) sharedEdges.push('M' + [a].concat(part).map(p => X(p[0]) + ' ' + Y(p[1])).join('L'));
      pts = pts.concat(part);
    });
    return 'M' + pts.map(p => X(p[0]) + ' ' + Y(p[1])).join('L') + 'Z';
  }).join('');
});
document.getElementById('maps').innerHTML = [['SrcCountry', '19,035,004'], ['DstCountry', '20,992,983']].map(([name, max], k) =>
  `<section class="panel">${head(name)}<svg class="map" width="483" height="233">` +
  world.map(c => { const f = color(c.levels[k]); return el('path', { d: c.d, fill: f, stroke: f, 'stroke-width': .3 }); }).join('') +
  el('path', { class: 'borders', d: sharedEdges.join('') }) + '</svg><div class="legend">' +
  Array.from({ length: 20 }, (_, i) => `<i style="background:${color(i + 1)}"></i>`).join('') +
  `</div><div class="ends"><span>0</span><span>${max}</span></div></section>`).join('');
```
